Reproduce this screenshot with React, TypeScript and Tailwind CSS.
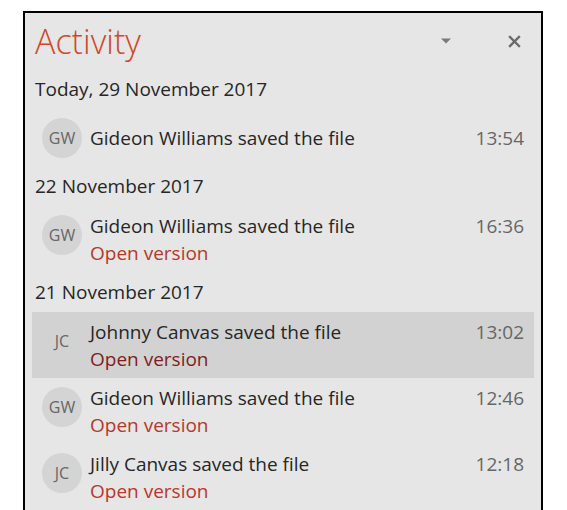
import React from "react";

type Entry = {
  initials: string;
  name: string;
  time: string;
  openVersion?: boolean;
  active?: boolean;
};

type Group = { label: string; entries: Entry[]; headerH: string };

const groups: Group[] = [
  {
    label: "Today, 29 November 2017",
    headerH: "h-[40px]",
    entries: [{ initials: "GW", name: "Gideon Williams saved the file", time: "13:54" }],
  },
  {
    label: "22 November 2017",
    headerH: "h-[39px]",
    entries: [{ initials: "GW", name: "Gideon Williams saved the file", time: "16:36", openVersion: true }],
  },
  {
    label: "21 November 2017",
    headerH: "h-[40px]",
    entries: [
      { initials: "JC", name: "Johnny Canvas saved the file", time: "13:02", openVersion: true, active: true },
      { initials: "GW", name: "Gideon Williams saved the file", time: "12:46", openVersion: true },
      { initials: "JC", name: "Jilly Canvas saved the file", time: "12:18", openVersion: true },
    ],
  },
];

const Avatar = ({ initials, active, top }: { initials: string; active?: boolean; top?: boolean }) => (
  <div
    className={`flex h-10 w-10 shrink-0 items-center justify-center rounded-full text-[16px] text-[#666] ${
      active ? "bg-transparent" : "bg-[#d4d4d4]"
    } ${top ? "mt-[2px]" : ""}`}
  >
    {initials}
  </div>
);

const Row = ({ e }: { e: Entry }) => {
  if (!e.openVersion) {
    return (
      <div className="mx-[7px] flex h-[58px] items-center gap-2 px-[10px]">
        <Avatar initials={e.initials} />
        <div className="flex-1 text-[19px] leading-[27px] text-[#262626]">{e.name}</div>
        <div className="text-[19px] leading-[27px] text-[#666]">{e.time}</div>
      </div>
    );
  }
  return (
    <div className={`mx-[7px] flex items-start gap-2 px-[10px] pt-[7px] pb-[5px] ${e.active ? "bg-[#d2d2d2]" : ""}`}>
      <Avatar initials={e.initials} active={e.active} top />
      <div className="flex-1 text-[19px] leading-[27px]">
        <div className="text-[#262626]">{e.name}</div>
        <div className={e.active ? "text-[#7f1d1d]" : "text-[#b7372a]"}>Open version</div>
      </div>
      <div className="text-[19px] leading-[27px] text-[#666]">{e.time}</div>
    </div>
  );
};

export default function App() {
  return (
    <div className="min-h-screen bg-white pl-[23px] pt-[11px]" style={{ fontFamily: '"Open Sans", "Noto Sans", sans-serif' }}>
      <div className="h-[499px] w-[520px] overflow-hidden border-2 border-b-0 border-black bg-[#e6e6e6]">
        <div className="flex h-[56px] items-center pl-[10px] pr-[20px]">
          <div className="flex-1 text-[34px] font-light leading-none text-[#d24726]">Activity</div>
          <svg width="12" height="8" viewBox="0 0 12 8" className="mr-[56px]">
            <path d="M1 1.5h10L6 6.5z" fill="#7a7a7a" />
          </svg>
          <svg width="13" height="13" viewBox="0 0 13 13">
            <path d="M2 2l9 9M11 2l-9 9" stroke="#6a6a6a" strokeWidth="2.4" strokeLinecap="square" />
          </svg>
        </div>
        {groups.map((g) => (
          <div key={g.label}>
            <div className={`flex ${g.headerH} items-center pl-[10px] text-[19px] text-[#262626]`}>{g.label}</div>
            {g.entries.map((e, i) => (
              <Row key={i} e={e} />
            ))}
          </div>
        ))}
      </div>
    </div>
  );
}
